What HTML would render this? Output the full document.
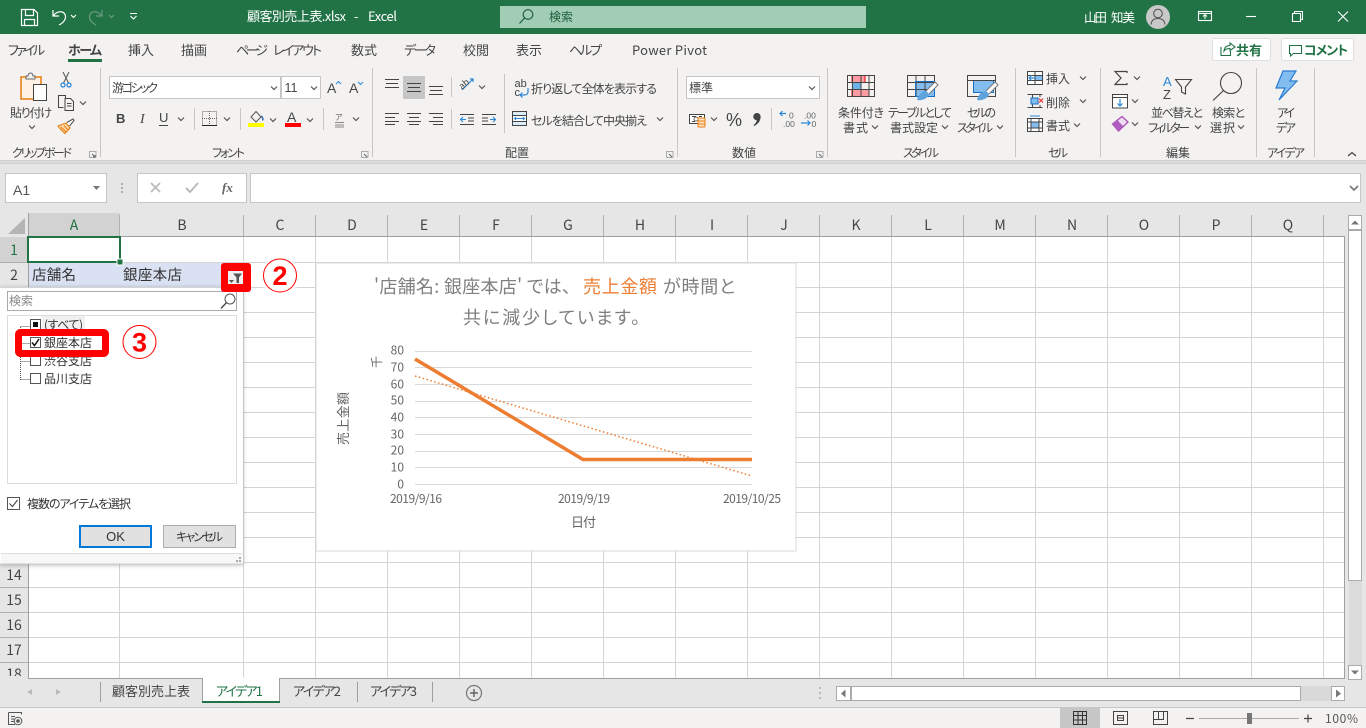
<!DOCTYPE html>
<html lang="ja">
<head>
<meta charset="utf-8">
<title>顧客別売上表.xlsx - Excel</title>
<style>
html,body{margin:0;padding:0;width:1366px;height:728px;overflow:hidden;background:#e6e6e6}
svg{display:block;font-family:"Liberation Sans","Noto Sans CJK JP",sans-serif;font-feature-settings:"palt"}
.j{font-family:"Noto Sans CJK JP","Liberation Sans",sans-serif;font-feature-settings:"palt"}
.s{font-size:12px;fill:#444}
.m{font-size:13px;fill:#444}
.ln{fill:none;stroke:#444;stroke-width:1}
</style>
</head>
<body>
<svg width="1366" height="728" viewBox="0 0 1366 728" xmlns="http://www.w3.org/2000/svg">
<defs>
<path id="c" d="M-3 -1.5L0 1.5L3 -1.5" fill="none" stroke="#555" stroke-width="1.2"/>
<filter id="sh" x="-10%" y="-10%" width="120%" height="120%"><feGaussianBlur stdDeviation="2.5"/></filter>
<filter id="gl" x="-30%" y="-30%" width="160%" height="160%"><feGaussianBlur stdDeviation="1.2"/></filter>
</defs>

<!-- title bar -->
<rect width="1366" height="34" fill="#217346"/>
<g fill="none" stroke="#fff" stroke-width="1.2">
<path d="M21.5 9.5H34L37.5 13V25.5H21.5Z"/><path d="M25.5 9.5V15.5H33.5V9.5M24.5 25.5V19.5H34.5V25.5"/>
<path d="M53 10V16H59M53.5 15.5C57 11 63 10.5 65 14.5C67 19 63 23 59 25"/>
</g>
<path d="M71 15l2.500 2.500 2.500-2.500" fill="none" stroke="#fff" stroke-width="1.100"/>
<g fill="none" stroke="#6b9c80" stroke-width="1.200"><path d="M102 10V16H96M101.500 15.500C98 11 92 10.500 90 14.500C88 19 92 23 96 25"/><path d="M109 15l2.500 2.500 2.500-2.500"/></g>
<path d="M130 13.500H137M130.500 16l3 3 3-3" fill="none" stroke="#fff" stroke-width="1.100"/>
<g class="j" font-size="13" fill="#fff">
<text x="247" y="21" textLength="99">顧客別売上表.xlsx</text>
<text x="354" y="21">-</text>
<text x="368" y="21" textLength="29">Excel</text>
</g>
<rect x="500" y="6" width="366" height="22" fill="#a0cdb4"/>
<circle cx="528" cy="14.500" r="4.800" fill="none" stroke="#1d5c3b" stroke-width="1.100"/><path d="M524.500 18L519.500 23.500" stroke="#1d5c3b" stroke-width="1.200"/>
<text class="j" x="549" y="21" font-size="12" fill="#1d5c3b" textLength="24">検索</text>
<text class="j" x="1084" y="22" font-size="12.500" fill="#fff" textLength="23">山田</text>
<text class="j" x="1111" y="22" font-size="12.500" fill="#fff" textLength="24">知美</text>
<circle cx="1158" cy="17" r="12" fill="#c8c8c8"/>
<circle cx="1158" cy="13.500" r="4.300" fill="none" stroke="#555" stroke-width="1.100"/><path d="M1151 24.500C1151.500 20 1154 18.500 1158 18.500S1164.500 20 1165 24.500" fill="none" stroke="#555" stroke-width="1.100"/>
<g fill="none" stroke="#fff" stroke-width="1.100">
<rect x="1198.500" y="11.500" width="13" height="9"/><path d="M1198.500 13.500H1211.500M1205 19V15M1203 16.500L1205 14.500L1207 16.500"/>
<path d="M1246 16.500H1256"/>
<path d="M1292.500 13.500H1300.500V21.500H1292.500ZM1294.500 13.500V11.500H1302.500V19.500H1300.500"/>
<path d="M1338 11.500L1348 21.500M1348 11.500L1338 21.500"/>
</g>

<!-- ribbon -->
<rect y="34" width="1366" height="127" fill="#f3f2f1"/>
<rect y="160" width="1366" height="4" fill="#d2d0ce"/>
<rect y="161" width="1366" height="2" fill="#dcdcdc"/>
<g class="j m">
<text x="8" y="55" textLength="37" font-size="13" fill="#444">ファイル</text>
<text x="68" y="55" textLength="34" font-weight="700" font-size="13" fill="#444">ホーム</text>
<text x="128" y="55" textLength="26" font-size="13" fill="#444">挿入</text>
<text x="181" y="55" textLength="26" font-size="13" fill="#444">描画</text>
<text x="236" y="55" textLength="32" font-size="13" fill="#444">ページ</text>
<text x="273" y="55" textLength="49" font-size="13" fill="#444">レイアウト</text>
<text x="351" y="55" textLength="26" font-size="13" fill="#444">数式</text>
<text x="404" y="55" textLength="32" font-size="13" fill="#444">データ</text>
<text x="463" y="55" textLength="26" font-size="13" fill="#444">校閲</text>
<text x="516" y="55" textLength="26" font-size="13" fill="#444">表示</text>
<text x="569" y="55" textLength="33" font-size="13" fill="#444">ヘルプ</text>
<text x="632" y="55" textLength="75" font-size="13" fill="#444">Power Pivot</text>
</g>
<rect x="68" y="59" width="34" height="3" fill="#217346"/>

<!-- share / comment -->
<rect x="1212.500" y="38.500" width="58" height="22" rx="2" fill="#fff" stroke="#e1dfdd"/>
<rect x="1281.500" y="38.500" width="72" height="22" rx="2" fill="#fff" stroke="#e1dfdd"/>
<path d="M1221 47V55.500H1230.500V51M1224 51C1224.500 47 1227 45.500 1230 45.500V43L1235 47L1230 50.500V48.500C1228 48.500 1225.500 49 1224 51Z" fill="none" stroke="#217346" stroke-width="1.100"/>
<text class="j" x="1236" y="55" font-size="13" font-weight="700" fill="#217346" textLength="26">共有</text>
<path d="M1289.500 45.500H1301.500V53.500H1293.500L1290.500 56V53.500H1289.500Z" fill="none" stroke="#217346" stroke-width="1.100"/>
<text class="j" x="1304" y="55" font-size="13" font-weight="700" fill="#217346" textLength="44">コメント</text>

<!-- group separators -->
<path d="M100.500 68V157M372.500 68V157M677.500 68V157M827.500 68V157M1015.500 68V157M1100.500 68V157M1256.500 68V157M1314.500 68V157M504.500 74V133M451.500 77V97M451.500 109V129M771.500 108V130M194.500 108V130M240.500 108V130M323.500 108V130" stroke="#c8c6c4" fill="none"/>

<!-- clipboard -->
<rect x="21" y="77" width="20" height="22" fill="#fdf1e3" stroke="#e87d0d" stroke-width="1.500"/>
<path d="M26 78V76H28C28.500 72 32.500 72 33 76H35V79H26Z" fill="#f3f2f1" stroke="#666"/>
<rect x="33.500" y="84.500" width="13" height="16" fill="#fff" stroke="#444"/>
<text class="j" x="10" y="117" font-size="12" fill="#444" textLength="42">貼り付け</text>
<use href="#c" x="32" y="127"/>
<g fill="none" stroke="#555" stroke-width="1"><path d="M63 72L68.500 83M69 72L63.500 83"/></g>
<circle cx="63" cy="85" r="2" fill="none" stroke="#2b88d8" stroke-width="1.300"/><circle cx="69" cy="85" r="2" fill="none" stroke="#2b88d8" stroke-width="1.300"/>
<path d="M63.500 107.500H58.500V95.500H65.500V98M65 98.500H70.500L73.500 101.500V110.500H65ZM67 103.500H71.500M67 106H71.500" fill="none" stroke="#444" stroke-width="1"/>
<use href="#c" x="83" y="103"/>
<path d="M58 126L66 123L70 128L65 133.500C62 131 60 129 58 126ZM61 127L66 132M64 125.500L68 130" fill="#fbd9ae" stroke="#e87d0d" stroke-width="1.100"/>
<path d="M67 122.500L73 119L74 120.500L69.500 126" fill="#fff" stroke="#555" stroke-width="1.100"/>
<text class="j s" x="12" y="157" textLength="60" font-size="12" fill="#444">クリップボード</text>
<path d="M89 151.500H96V157.500M89.500 151.500V157.500H96" stroke="#aaa" fill="none"/><path d="M92 154L95 157M95 155V157H93" stroke="#666" fill="none"/>

<!-- font -->
<rect x="109.500" y="76.500" width="171" height="22" fill="#fff" stroke="#c6c6c6"/>
<rect x="281.500" y="76.500" width="39" height="22" fill="#fff" stroke="#c6c6c6"/>
<text class="j" x="112" y="92" font-size="12" fill="#444" textLength="46">游ゴシック</text>
<text x="284.500" y="92" font-size="12.500" fill="#444" textLength="13">11</text>
<use href="#c" x="274" y="88"/><use href="#c" x="314" y="88"/>
<text x="327" y="93" font-size="14" fill="#444">A</text><path d="M336 84l2.500-2.500 2.500 2.500" fill="none" stroke="#2b88d8"/>
<text x="349" y="93" font-size="14" fill="#444">A</text><path d="M358 82l2.500 2.500 2.500-2.500" fill="none" stroke="#2b88d8"/>
<text x="116" y="123" font-size="13" font-weight="700" fill="#444">B</text>
<text x="140" y="123" font-size="14" font-style="italic" fill="#444" font-family="Liberation Serif">I</text>
<text x="159" y="122" font-size="13" fill="#444">U</text><path d="M159 125.500H168" stroke="#444"/>
<use href="#c" x="181" y="119"/>
<rect x="202.500" y="111.500" width="14" height="14" fill="none" stroke="#666" stroke-dasharray="1 1"/><path d="M209.500 111V125M202 118.500H217" stroke="#666" stroke-dasharray="1 1"/><path d="M202 125.500H217" stroke="#222"/>
<use href="#c" x="227" y="119"/>
<path d="M251 117L256 111.500L261 117L256 122Z" fill="none" stroke="#555"/><path d="M261 116c1.500 1 2.500 3 1.500 4.500" fill="none" stroke="#2b6cb0" stroke-width="1.500"/>
<rect x="248" y="123" width="16" height="4" fill="#ff0"/>
<use href="#c" x="273" y="120"/>
<text x="287" y="122" font-size="14" fill="#444">A</text><rect x="285" y="123" width="16" height="4" fill="#f00"/>
<use href="#c" x="310" y="120"/>
<text class="j" x="335" y="120" font-size="8" fill="#666">ア</text><path d="M335 122.500H344M335 125H344M335 127H344" stroke="#888"/>
<use href="#c" x="356" y="119"/>
<text class="j" x="212" y="157" font-size="12" fill="#444" textLength="33">フォント</text>
<path d="M361 151.500H368V157.500M361.500 151.500V157.500H368" stroke="#aaa" fill="none"/><path d="M364 154L367 157" stroke="#666" fill="none"/>

<!-- alignment -->
<rect x="403" y="76" width="22" height="23" fill="#c6c6c6"/>
<path d="M385 79.500H399M386 83.500H398M385 87.500H399M407 83.500H421M408 87.500H420M407 91.500H421M429 86.500H443M430 90.500H442M429 94.500H443M385 113.500H399M385 117.500H395M385 121.500H399M385 124.500H395M407 113.500H421M409 117.500H419M407 121.500H421M409 124.500H419M429 113.500H443M433 117.500H443M429 121.500H443M433 124.500H443" stroke="#444" fill="none"/>
<path d="M462 90L473 79M470 79H473V82" fill="none" stroke="#2b88d8" stroke-width="1.200"/>
<text class="j" x="459" y="88" font-size="9" fill="#444" transform="rotate(-40 463 85)">ab</text>
<use href="#c" x="482" y="87"/>
<path d="M460 114.500H474M468 118H474M468 121H474M460 124.500H474M482 114.500H496M482 118H488M482 121H488M482 124.500H496" stroke="#444" fill="none"/>
<path d="M466 119.500H460.500M463 117L460.500 119.500L463 122M490 119.500H495.500M493 117L495.500 119.500L493 122" stroke="#2b88d8" fill="none" stroke-width="1.100"/>
<text x="514.500" y="87" font-size="11" fill="#444">ab</text><text x="514.500" y="96" font-size="11" fill="#444">c</text>
<path d="M528 88V92C528 94 526 95 524 95H520M522.500 92.500L520 95L522.500 97.500" stroke="#2b88d8" fill="none" stroke-width="1.200"/>
<text class="j" x="531" y="93" font-size="12" fill="#444" textLength="126">折り返して全体を表示する</text>
<rect x="512.500" y="111.500" width="14" height="14" fill="#dcebf8" stroke="#444"/><path d="M512.500 115.500H526.500M512.500 121.500H526.500" stroke="#444"/><rect x="513" y="116" width="13" height="5" fill="#fff"/><path d="M514.500 118.500H524.500M516 117L514.500 118.500L516 120M523 117L524.500 118.500L523 120" stroke="#2b88d8" fill="none"/>
<text class="j" x="531" y="125" font-size="12" fill="#444" textLength="116">セルを結合して中央揃え</text>
<use href="#c" x="660" y="119"/>
<text class="j" x="505" y="157" font-size="12" fill="#444" textLength="24">配置</text>
<path d="M666 151.500H673V157.500M666.500 151.500V157.500H673" stroke="#aaa" fill="none"/><path d="M669 154L672 157" stroke="#666" fill="none"/>

<!-- number -->
<rect x="686.500" y="76.500" width="133" height="22" fill="#fff" stroke="#c6c6c6"/>
<text class="j" x="689" y="92" font-size="12" fill="#444" textLength="24">標準</text>
<use href="#c" x="812" y="88"/>
<rect x="689.500" y="114.500" width="15" height="9" fill="#fff" stroke="#444"/><path d="M692 116.500H696M692 121.500H695M699 116.500H702" stroke="#444"/><circle cx="696" cy="119" r="2" fill="none" stroke="#444" stroke-width=".8"/>
<rect x="698" y="118" width="7" height="9" rx="1" fill="#fde3c4" stroke="#e87d0d"/><path d="M698 121H705M698 124H705" stroke="#e87d0d"/>
<use href="#c" x="714" y="119"/>
<text x="726" y="126" font-size="18" fill="#444">%</text>
<path d="M757 113a3.600 3.600 0 0 1 3.600 4c0 4-3 7.500-6.500 9l-.6-1c2-1.200 3-3 3.200-4.800a3.500 3.500 0 0 1 .3-7.200z" fill="#444"/>
<text x="789" y="118.500" font-size="8.500" fill="#666">0</text><text x="783" y="127" font-size="8.500" fill="#666">.00</text>
<path d="M786 113.500H780M782.500 111L780 113.500L782.500 116" stroke="#2b88d8" fill="none" stroke-width="1.200"/>
<text x="804" y="118.500" font-size="8.500" fill="#666">.00</text><text x="811.500" y="127" font-size="8.500" fill="#666">0</text>
<path d="M801 123H810M807.500 120.500L810 123L807.500 125.500" stroke="#2b88d8" fill="none" stroke-width="1.200"/>
<text class="j" x="732" y="157" font-size="12" fill="#444" textLength="24">数値</text>
<path d="M816 151.500H823V157.500M816.500 151.500V157.500H823" stroke="#aaa" fill="none"/><path d="M819 154L822 157" stroke="#666" fill="none"/>

<!-- styles -->
<rect x="852" y="75.500" width="13" height="7" fill="#ff9ca3" stroke="#e00" stroke-width="1"/>
<rect x="852.500" y="83" width="8" height="6.500" fill="#6cb2eb"/>
<rect x="852" y="89.500" width="17" height="7" fill="#ff9ca3" stroke="#e00" stroke-width="1"/>
<path d="M847.500 75.500H874.500V96.500H847.500ZM847.500 82.500H874.500M847.500 89.500H874.500M852.500 75.500V96.500M861 75.500V96.500M869 75.500V96.500" fill="none" stroke="#444"/>
<rect x="916" y="82" width="18" height="14.500" fill="#83bdef"/>
<path d="M907.500 75.500H934.500V96.500H907.500ZM907.500 82.500H934.500M907.500 89.500H934.500M916 75.500V96.500M925 75.500V96.500" fill="none" stroke="#444"/>
<path d="M915.500 81.500H934.500V96.500H915.500Z" fill="none" stroke="#1a6fc0"/>
<path d="M926 91L935 82L938 85L929 94" fill="#fff" stroke="#777"/>
<path d="M917 100C918 95 922 91 926 91L929 94C929 98 922 101 917 100Z" fill="#5ea3dc"/>
<rect x="973.500" y="80.500" width="20" height="12" fill="#83bdef" stroke="#1a6fc0"/>
<path d="M967.500 75.500H995.500V96.500H967.500ZM967.500 80.500H995.500" fill="none" stroke="#444"/>
<path d="M986 91L995 82L998 85L989 94" fill="#fff" stroke="#777"/>
<path d="M977 100C978 95 982 91 986 91L989 94C989 98 982 101 977 100Z" fill="#5ea3dc"/>
<g class="j" font-size="12" fill="#444">
<text x="838" y="117" textLength="46">条件付き</text>
<text x="843" y="132" textLength="25">書式</text>
<text x="888" y="117" textLength="64">テーブルとして</text>
<text x="890" y="132" textLength="48">書式設定</text>
<text x="967" y="117" textLength="29">セルの</text>
<text x="957" y="132" textLength="36">スタイル</text>
<text x="903" y="157" textLength="36">スタイル</text>
<text x="1048" y="157" textLength="20">セル</text>
<text x="1166" y="157" textLength="24">編集</text>
<text x="1267" y="157" textLength="38">アイデア</text>
</g>
<use href="#c" x="875" y="127"/><use href="#c" x="945" y="127"/><use href="#c" x="1000" y="127"/>

<!-- cells -->
<rect x="1027.500" y="71.500" width="15" height="13" fill="#fff" stroke="#444"/><rect x="1035" y="75" width="7" height="6" fill="#83bdef"/><path d="M1027.500 75.500H1042.500M1027.500 80.500H1042.500M1035 71.500V84.500" stroke="#444" fill="none"/><path d="M1036 78H1029M1031.500 75.500L1029 78L1031.500 80.500" stroke="#2b88d8" fill="none" stroke-width="1.200"/>
<path d="M1027.500 94.500H1042.500M1027.500 107.500H1042.500M1032.500 94.500V98M1032.500 104V107.500M1040 94.500V97M1040 105V107.500" stroke="#444" fill="none"/><rect x="1031" y="98" width="7" height="6" fill="#83bdef" stroke="#1a6fc0"/><path d="M1039 98.500L1043 102.500M1043 98.500L1039 102.500" stroke="#e33" stroke-width="1.200"/>
<rect x="1027.500" y="118.500" width="15" height="13" fill="#fff" stroke="#444"/><rect x="1031" y="122" width="8" height="6" fill="#83bdef"/><path d="M1027.500 122H1042.500M1027.500 128H1042.500M1031 118.500V131.500M1039 118.500V131.500" stroke="#444" fill="none"/><path d="M1030 116H1040" stroke="#2b88d8"/>
<g class="j" font-size="12" fill="#444">
<text x="1046" y="83" textLength="24">挿入</text>
<text x="1046" y="107" textLength="24">削除</text>
<text x="1046" y="130" textLength="24">書式</text>
</g>
<use href="#c" x="1083" y="78"/><use href="#c" x="1083" y="101"/><use href="#c" x="1077" y="125"/>

<!-- editing -->
<path d="M1127 73V71.500H1115L1121 78L1115 84.500H1127V83" fill="none" stroke="#444" stroke-width="1.200"/>
<use href="#c" x="1137" y="78"/>
<rect x="1112.500" y="94.500" width="15" height="13.500" fill="#fff" stroke="#444"/><path d="M1112.500 97.500H1127.500" stroke="#444"/><path d="M1120 99V106M1117.500 103.500L1120 106L1122.500 103.500" stroke="#2b88d8" fill="none" stroke-width="1.200"/>
<use href="#c" x="1135" y="101"/>
<path d="M1112.500 124L1122 116.500L1128 122L1118.500 131Z" fill="#f0dff3" stroke="#a94fb5" stroke-width="1.300"/><path d="M1112.500 124L1117 119.800L1123 126L1118.500 131Z" fill="#b05cc0"/>
<use href="#c" x="1135" y="124"/>
<text x="1163" y="86" font-size="13" fill="#2b88d8">A</text>
<text x="1163" y="99" font-size="13" fill="#444">Z</text>
<path d="M1175.500 79.500H1191.500L1185.500 87V94L1181.500 92V87Z" fill="none" stroke="#444" stroke-width="1.100"/>
<circle cx="1231" cy="83" r="10.500" fill="none" stroke="#444" stroke-width="1.100"/><path d="M1223.500 90.500L1213 100.500" stroke="#444" stroke-width="1.200"/>
<g class="j" font-size="12" fill="#444">
<text x="1151" y="117" textLength="52">並べ替えと</text>
<text x="1148" y="132" textLength="42">フィルター</text>
<text x="1212" y="117" textLength="33">検索と</text>
<text x="1210" y="132" textLength="25">選択</text>
<text x="1277" y="117" textLength="18">アイ</text>
<text x="1276" y="132" textLength="20">デア</text>
</g>
<use href="#c" x="1198" y="127"/><use href="#c" x="1241" y="127"/>
<path d="M1283 71H1296L1290 81H1297L1279 100L1285 88H1276Z" fill="#83bdef" stroke="#2b7cd3" stroke-width="1.200"/>
<path d="M1348 156L1352 152.500L1356 156" fill="none" stroke="#444" stroke-width="1.200"/>

<!-- formula bar -->
<rect y="164" width="1366" height="49" fill="#e6e6e6"/>
<rect x="5.500" y="173.500" width="101" height="29" fill="#fff" stroke="#c6c6c6"/>
<text x="13" y="195" font-size="14" fill="#555">A1</text>
<path d="M93 186H100L96.500 190Z" fill="#777"/>
<path d="M122 183V185M122 187V189M122 191V193" stroke="#999" stroke-width="1.500"/>
<rect x="137.500" y="173.500" width="109" height="29" fill="#fff" stroke="#c6c6c6"/>
<rect x="250.500" y="173.500" width="1110" height="29" fill="#fff" stroke="#c6c6c6"/>
<path d="M151 183L160 192M160 183L151 192" stroke="#bbb" stroke-width="1.800"/>
<path d="M186 188L190 192L198 183" fill="none" stroke="#bbb" stroke-width="2"/>
<text x="222" y="192" font-size="13" font-style="italic" font-weight="700" fill="#666" font-family="Liberation Serif">fx</text>
<path d="M1350 186L1354 190L1358 186" fill="none" stroke="#777" stroke-width="1.600"/>

<!-- sheet -->
<rect x="28" y="237" width="1317" height="442" fill="#fff"/>
<path stroke="#d4d4d4" fill="none" d="M119.500 237V679M243.500 237V679M315.500 237V679M387.500 237V679M459.500 237V679M531.500 237V679M603.500 237V679M675.500 237V679M747.500 237V679M819.500 237V679M891.500 237V679M963.500 237V679M1035.500 237V679M1107.500 237V679M1179.500 237V679M1251.500 237V679M1323.500 237V679M28 262.500H1345M28 287.500H1345M28 312.500H1345M28 337.500H1345M28 362.500H1345M28 387.500H1345M28 412.500H1345M28 437.500H1345M28 462.500H1345M28 487.500H1345M28 512.500H1345M28 537.500H1345M28 562.500H1345M28 587.500H1345M28 612.500H1345M28 637.500H1345M28 662.500H1345"/>
<rect x="29" y="263" width="214" height="24" fill="#d9e1f2"/>
<!-- headers -->
<rect x="28" y="213" width="92" height="24" fill="#d2d2d2"/>
<rect x="0" y="237" width="28" height="25" fill="#d2d2d2"/>
<path d="M8 234L25 218V234Z" fill="#b4b4b4"/>
<path stroke="#b0b0b0" fill="none" d="M119.500 215V236M243.500 215V236M315.500 215V236M387.500 215V236M459.500 215V236M531.500 215V236M603.500 215V236M675.500 215V236M747.500 215V236M819.500 215V236M891.500 215V236M963.500 215V236M1035.500 215V236M1107.500 215V236M1179.500 215V236M1251.500 215V236M1323.500 215V236M0 287.500H28M0 562.500H28M0 587.500H28M0 612.500H28M0 637.500H28M0 662.500H28M0 262.500H28"/>
<path stroke="#9f9f9f" fill="none" d="M28.500 213V679M28 236.500H1345M1344.500 237V679M0 678.500H1345"/>
<g class="j" font-size="14" fill="#444" text-anchor="middle">
<text x="74" y="230" fill="#217346">A</text><text x="182" y="230">B</text><text x="280" y="230">C</text><text x="352" y="230">D</text><text x="424" y="230">E</text><text x="496" y="230">F</text><text x="568" y="230">G</text><text x="640" y="230">H</text><text x="712" y="230">I</text><text x="784" y="230">J</text><text x="856" y="230">K</text><text x="928" y="230">L</text><text x="1000" y="230">M</text><text x="1072" y="230">N</text><text x="1144" y="230">O</text><text x="1216" y="230">P</text><text x="1288" y="230">Q</text>
<text x="14" y="255" fill="#217346">1</text><text x="14" y="280">2</text><text x="14" y="580">14</text><text x="14" y="605">15</text><text x="14" y="630">16</text><text x="14" y="655">17</text><text x="14" y="679">18</text>
</g>
<rect y="676" width="28" height="3" fill="#e6e6e6"/>
<path d="M28 678.500H1345" stroke="#9f9f9f"/>
<rect x="28" y="237" width="92" height="25" fill="none" stroke="#217346" stroke-width="2"/>
<rect x="117" y="259" width="6" height="6" fill="#217346" stroke="#fff"/>
<g class="j" font-size="14.500" fill="#333">
<text x="32" y="280" textLength="44">店舗名</text>
<text x="123" y="280" textLength="59">銀座本店</text>
</g>

<!-- chart -->
<rect x="316" y="263" width="480" height="288" fill="#fff" stroke="#d9d9d9"/>
<g class="j" font-size="18" fill="#7f7f7f">
<text x="374" y="293" textLength="197">'店舗名: 銀座本店' では、</text>
<text x="583" y="293" textLength="74" fill="#ed7d31">売上金額</text>
<text x="663" y="293" textLength="72">が時間と</text>
<text x="463" y="324" textLength="177">共に減少しています。</text>
</g>
<path stroke="#d9d9d9" fill="none" d="M415 351.500H752M415 367.500H752M415 384.500H752M415 401.500H752M415 417.500H752M415 434.500H752M415 451.500H752M415 467.500H752M415 484.500H752"/>
<path d="M415 376L752 476" stroke="#ed7d31" stroke-width="1.500" stroke-dasharray="1.500 2.500" fill="none"/>
<path d="M415 359L583 459.500H752" stroke="#ed7d31" stroke-width="3.500" fill="none"/>
<g class="j" font-size="12" fill="#666" text-anchor="end">
<text x="404" y="354.500">80</text><text x="404" y="371.500">70</text><text x="404" y="388.500">60</text><text x="404" y="404.500">50</text><text x="404" y="421.500">40</text><text x="404" y="438.500">30</text><text x="404" y="454.500">20</text><text x="404" y="471.500">10</text><text x="404" y="488.500">0</text>
</g>
<g class="j" font-size="12" fill="#666">
<text x="390" y="503" textLength="52">2019/9/16</text>
<text x="558" y="503" textLength="52">2019/9/19</text>
<text x="723" y="503" textLength="58">2019/10/25</text>
<text x="571" y="527" textLength="25" font-size="13">日付</text>
<text transform="translate(381 368) rotate(-90)" font-size="12">千</text>
<text transform="translate(348 445) rotate(-90)" font-size="13" textLength="53">売上金額</text>
</g>

<!-- dropdown -->
<rect x="0" y="288" width="243" height="277" fill="#000" opacity=".28" filter="url(#sh)"/>
<rect x="0" y="287" width="243" height="277" fill="#fff"/>
<path d="M243.500 287V564M0 564H243" stroke="#c6c6c6" fill="none"/>
<path d="M0 287.500H243" stroke="#d4d4d4"/>
<rect x="7.500" y="291.500" width="229" height="19" fill="#fff" stroke="#aaa"/>
<text class="j" x="9" y="305" font-size="12" fill="#888" textLength="24">検索</text>
<circle cx="230" cy="299" r="5" fill="none" stroke="#555"/><path d="M226.500 302.500L221 308.500" stroke="#444" stroke-width="1.300"/>
<rect x="7.500" y="315.500" width="229" height="168" fill="#fff" stroke="#dcdcdc"/>
<rect x="42" y="316" width="43" height="15" fill="#f0f0f0"/>
<path d="M20.500 327V380M20.500 326.500H30M20.500 343.500H30M20.500 361.500H30M20.500 379.500H30" stroke="#555" stroke-dasharray="1 1" fill="none"/>
<rect x="30.500" y="319.500" width="10" height="10" fill="#fff" stroke="#555"/><rect x="33" y="322" width="5" height="5" fill="#111"/>
<rect x="30.500" y="337.500" width="10" height="10" fill="#fff" stroke="#555"/><path d="M32 342.500L34.500 345.500L39 339" fill="none" stroke="#111" stroke-width="1.500"/>
<rect x="30.500" y="355.500" width="10" height="10" fill="#fff" stroke="#555"/>
<rect x="30.500" y="373.500" width="10" height="10" fill="#fff" stroke="#555"/>
<g class="j" font-size="12" fill="#333">
<text x="44" y="329" textLength="39">(すべて)</text>
<text x="44" y="347" textLength="48">銀座本店</text>
<text x="44" y="365" textLength="48">渋谷支店</text>
<text x="44" y="383" textLength="48">品川支店</text>
<text x="27" y="508" textLength="104">複数のアイテムを選択</text>
</g>
<rect x="7.500" y="497.500" width="12" height="12" fill="#fff" stroke="#555"/><path d="M9.500 503.500L12.500 506.500L17.500 500" fill="none" stroke="#444" stroke-width="1.100"/>
<rect x="80" y="526" width="71" height="21" fill="#e1e1e1" stroke="#0078d7" stroke-width="2"/>
<text x="115.500" y="541" font-size="13" fill="#333" text-anchor="middle">OK</text>
<rect x="163.500" y="525.500" width="72" height="22" fill="#e1e1e1" stroke="#adadad"/>
<text class="j" x="176" y="541" font-size="12" fill="#333" textLength="47">キャンセル</text>
<path d="M1 553.500H242" stroke="#dcdcdc"/><rect x="1" y="554" width="241" height="9" fill="#f7f7f7"/>
<path d="M239 557h2v2h-2zM236 560h2v2h-2zM239 560h2v2h-2z" fill="#aaa"/>

<!-- annotations -->
<rect x="221" y="263" width="30" height="29" rx="3" fill="#f00"/>
<rect x="228" y="271" width="15" height="13" fill="#f0f0f0"/>
<path d="M233 273.500H242L239 277.500V283H236.500V277.500Z" fill="#555"/><path d="M229 280H234L231.500 283Z" fill="#555"/>
<rect x="18.500" y="332.500" width="87" height="21" rx="2" fill="none" stroke="#f00" stroke-width="7"/>
<circle cx="280" cy="275.500" r="19.500" fill="#fff" filter="url(#gl)"/>
<circle cx="280" cy="275.500" r="16.500" fill="#fff" stroke="#f00" stroke-width="1"/>
<text x="280" y="285" font-size="27" font-weight="700" fill="#f00" text-anchor="middle">2</text>
<circle cx="139.500" cy="342" r="19.500" fill="#fff" filter="url(#gl)"/>
<circle cx="139.500" cy="342" r="16.500" fill="#fff" stroke="#f00" stroke-width="1"/>
<text x="139.500" y="351.500" font-size="27" font-weight="700" fill="#f00" text-anchor="middle">3</text>

<!-- vertical scrollbar -->
<rect x="1345" y="213" width="21" height="495" fill="#e6e6e6"/>
<rect x="1348.500" y="215.500" width="13" height="14" fill="#fff" stroke="#ababab"/><path d="M1351 224.500L1355 220.500L1359 224.500Z" fill="#777"/>
<rect x="1348.500" y="230.500" width="13" height="350" fill="#fff" stroke="#ababab"/>
<rect x="1349" y="581" width="13" height="84" fill="#dcdcdc"/>
<rect x="1348.500" y="665.500" width="13" height="14" fill="#fff" stroke="#ababab"/><path d="M1351 670.500L1355 674.500L1359 670.500Z" fill="#777"/>

<!-- tabs -->
<rect y="679" width="1345" height="28" fill="#e6e6e6"/>
<path d="M1345 707.500H0" stroke="#c6c6c6"/>
<path d="M1345 707.500H1366" stroke="#c6c6c6"/>
<path d="M32 689V695L27 692ZM56 689V695L61 692Z" fill="#bbb"/>
<path d="M100.500 682V702M357.500 682V702M432.500 682V702" stroke="#9f9f9f"/>
<path d="M202.500 679V702M279.500 679V702" stroke="#9f9f9f"/>
<rect x="203" y="678" width="76" height="24" fill="#fff"/>
<rect x="202" y="701" width="78" height="2" fill="#217346"/>
<g class="j" font-size="13" fill="#444">
<text x="112" y="696" textLength="78">顧客別売上表</text>
<text x="216" y="696" textLength="47" fill="#217346">アイデア1</text>
<text x="293" y="696" textLength="48">アイデア2</text>
<text x="370" y="696" textLength="47">アイデア3</text>
</g>
<circle cx="474" cy="693" r="7.500" fill="none" stroke="#777" stroke-width="1.200"/><path d="M470 693H478M474 689V697" stroke="#666" stroke-width="1.500"/>
<path d="M820 687V689M820 692V694M820 697V699" stroke="#aaa" stroke-width="1.500"/>
<rect x="836.500" y="686.500" width="14" height="14" fill="#fff" stroke="#ababab"/><path d="M845.500 689.500V697.500L841 693.500Z" fill="#777"/>
<rect x="851.500" y="686.500" width="449" height="14" fill="#fff" stroke="#ababab"/>
<rect x="1301" y="686" width="30" height="15" fill="#d9d9d9"/>
<rect x="1331.500" y="686.500" width="13" height="14" fill="#fff" stroke="#ababab"/><path d="M1336 689.500V697.500L1341 693.500Z" fill="#777"/>

<!-- status -->
<rect y="708" width="1366" height="20" fill="#f3f2f1"/>
<path d="M8.500 712.500H21.500V714.500M8.500 712.500V724.500H15M11 716.500H15M11 719H14M11 721.500H14" stroke="#555" fill="none"/><circle cx="18" cy="721" r="3.800" fill="none" stroke="#555"/><circle cx="18" cy="721" r="1.800" fill="#555"/>
<rect x="1060" y="708" width="40" height="20" fill="#c6c6c6"/>
<path d="M1073.500 711.500H1086.500V724.500H1073.500ZM1073.500 715.500H1086.500M1073.500 720H1086.500M1078 711.500V724.500M1082.500 711.500V724.500" fill="none" stroke="#333"/>
<path d="M1113.500 711.500H1127.500V724.500H1113.500ZM1117.500 715.500H1123.500V720.500H1117.500ZM1117.500 718H1123.500" fill="none" stroke="#444"/>
<path d="M1153.500 711.500H1167.500V724.500H1153.500ZM1153.500 719.500H1163.500V711.500M1158.500 711.500V719.500" fill="none" stroke="#444"/>
<path d="M1186 718.500H1194M1304 718.500H1312M1308 714.500V722.500" stroke="#444" stroke-width="1.200"/>
<path d="M1199 718.500H1299" stroke="#aaa"/>
<rect x="1247" y="713" width="5" height="11" fill="#777"/>
<text class="j" x="1325" y="723" font-size="12" fill="#555" textLength="33">100%</text>
</svg>
</body>
</html>
